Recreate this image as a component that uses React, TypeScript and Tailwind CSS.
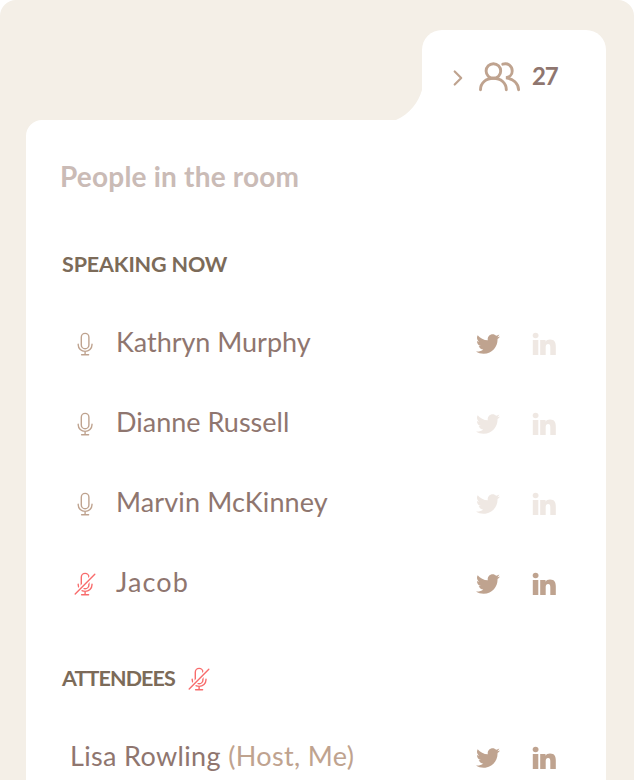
import { FaTwitter } from 'react-icons/fa';

type Person = { name: string; muted?: boolean; twitter?: boolean; linkedin?: boolean; nameClass: string };

const speakers: Person[] = [
  { name: 'Kathryn Murphy', twitter: true, nameClass: 'tracking-[-0.03px]' },
  { name: 'Dianne Russell', nameClass: 'tracking-[0px]' },
  { name: 'Marvin McKinney', nameClass: 'tracking-[0.12px]' },
  { name: 'Jacob', muted: true, twitter: true, linkedin: true, nameClass: 'tracking-[1.1px]' },
];

function Mic({ muted = false }: { muted?: boolean }) {
  return (
    <svg
      width="22"
      height="24"
      viewBox="0 0 22 24"
      fill="none"
      stroke={muted ? '#f86c6c' : '#bfa38f'}
      strokeWidth="1.4"
      strokeLinecap="round"
      className="shrink-0"
    >
      <rect x="7.3" y="1.4" width="7.6" height="15.3" rx="3.8" />
      <path d="M4.2 12.2v.6a6.9 6.6 0 0 0 13.8 0v-.6M11.1 19.5v3M7.6 22.8h7" />
      {muted && (
        <>
          <path d="M1.5 21.6 21.3 1.8" stroke="#fff" strokeWidth="4.2" strokeLinecap="butt" />
          <path d="M1.2 21.9 20.8 2.3" />
        </>
      )}
    </svg>
  );
}

function LinkedIn({ className }: { className: string }) {
  return (
    <svg width="24" height="24" viewBox="0 0 24 24" fill="currentColor" className={className}>
      <ellipse cx="3.6" cy="3.5" rx="2.9" ry="2.7" />
      <path d="M.8 7.900h5.500V23H.8zM8.200 7.900h5.300v1.900c.8-1.400 2.400-2.300 4.500-2.300 4.600 0 5.800 2.800 5.800 7V23h-5.500v-7.700c0-2-.3-3.300-2.200-3.300s-2.400 1.400-2.400 3.200V23H8.200z" />
    </svg>
  );
}

function Socials({ twitter = false, linkedin = false }: { twitter?: boolean; linkedin?: boolean }) {
  return (
    <div className="ml-auto flex items-center gap-8 pr-[50px]">
      <FaTwitter size={24} className={twitter ? 'text-[#bfa38f]' : 'text-[#efe8e3]'} />
      <LinkedIn className={linkedin ? 'text-[#bfa38f]' : 'text-[#efe8e3]'} />
    </div>
  );
}

export default function App() {
  return (
    <div className="h-[780px] w-[634px] overflow-hidden bg-white font-['Lato',sans-serif] text-[#8f766f]">
      <div className="flex h-full flex-col rounded-t-[16px] bg-[#f4efe7] pt-[30px] pr-7 pl-[26px]">
        <div className="flex h-[90px] shrink-0 items-end justify-end">
          <svg width="26" height="30" viewBox="0 0 26 30" className="shrink-0" fill="#fff">
            <path d="M26 0C22.500 12 14 24 0 30H26z" />
          </svg>
          <div className="flex h-full w-[184px] items-start rounded-t-[20px] bg-white pl-[30px]">
            <svg width="12" height="18" viewBox="0 0 12 18" fill="none" stroke="#bfa38f" strokeWidth="2.2" strokeLinecap="round" strokeLinejoin="round" className="mt-[39px]">
              <path d="m2.7 2.500 6.500 6.500-6.500 6.500" />
            </svg>
            <svg width="42" height="30" viewBox="0 0 42 30" fill="none" stroke="#bfa38f" strokeWidth="2.9" strokeLinecap="round" className="mt-8 ml-[15px]">
              <circle cx="14.400" cy="9" r="7.300" />
              <path d="M1.500 27.700C1.500 21 6.800 16.300 14.400 16.300S27.300 21 27.300 27.700" />
              <path d="M23.800 2.200C29 .500 33.200 4.300 33.200 8.900c0 3.800-2.800 6.500-6.200 6.900C34.300 16.800 39.300 21.300 39.600 27.700" />
            </svg>
            <span className="mt-[30px] ml-[11px] text-[24px] leading-8 font-bold tracking-[-1.2px]">27</span>
          </div>
        </div>
        <main className="flex-1 rounded-tl-[16px] bg-white">
          <h1 className="ml-[34px] pt-10 text-[28px] leading-8 font-bold tracking-[0.2px] text-[#cabbb6]">People in the room</h1>
          <h2 className="mt-14 ml-9 text-[21.5px] leading-8 font-bold tracking-[-0.15px] text-[#7c6b59]">SPEAKING NOW</h2>
          <ul className="mt-6">
            {speakers.map((p) => (
              <li key={p.name} className="flex h-20 items-center pl-12">
                <Mic muted={p.muted} />
                <span className={`ml-5 pb-1 text-[27px] leading-8 whitespace-nowrap ${p.nameClass}`}>{p.name}</span>
                <Socials twitter={p.twitter} linkedin={p.linkedin} />
              </li>
            ))}
          </ul>
          <div className="mt-[39px] flex h-8 items-center pl-9">
            <h2 className="pb-0.5 text-[21.5px] leading-8 font-bold tracking-[-0.9px] text-[#7c6b59]">ATTENDEES</h2>
            <div className="ml-[13px]">
              <Mic muted />
            </div>
          </div>
          <div className="mt-[23px] flex h-20 items-center pl-11">
            <span className="pb-[5px] text-[27px] leading-8 tracking-[0.35px] whitespace-nowrap">
              Lisa Rowling <span className="tracking-[0.35px] text-[#bfa38f]">(Host, Me)</span>
            </span>
            <Socials twitter linkedin />
          </div>
        </main>
      </div>
    </div>
  );
}
